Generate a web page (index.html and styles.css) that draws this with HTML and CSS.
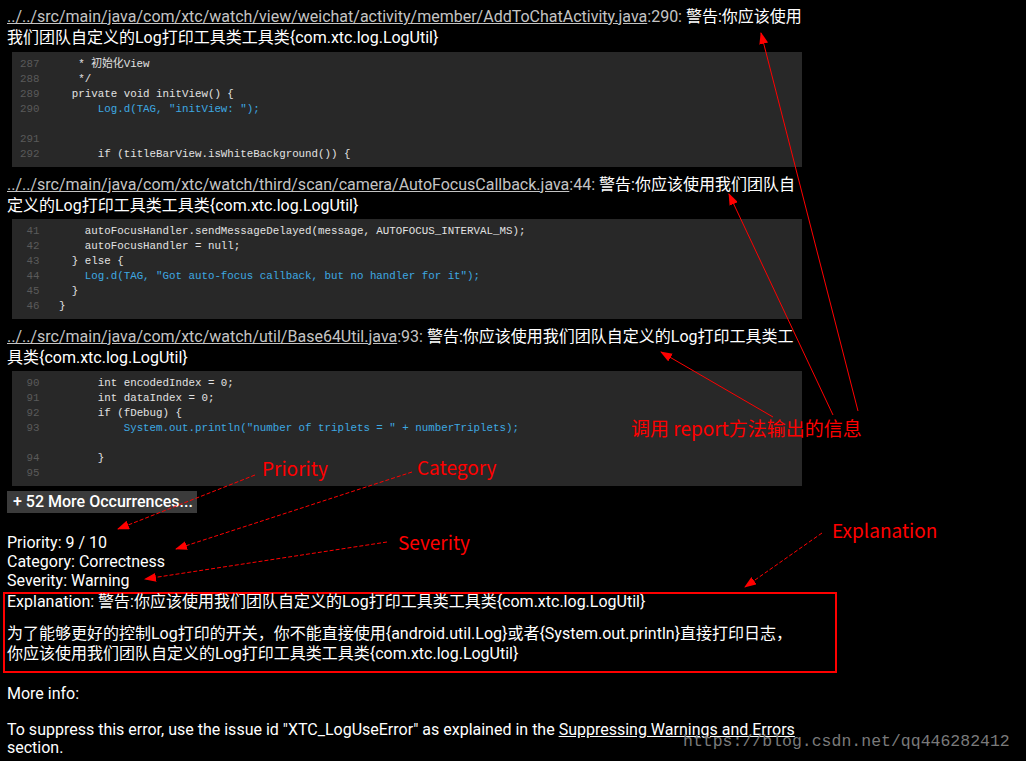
FILE: index.html
```html
<!DOCTYPE html>
<html lang="zh-CN">
<head>
  <meta charset="UTF-8" />
  <meta name="viewport" content="width=device-width, initial-scale=1.0"/>
  <title>Lint Report - XTC_LogUseError</title>
  <link rel="stylesheet" href="styles.css">
</head>
<body>
  <div class="report">
    <!-- occurrence 1 -->
    <div class="loc">
      <a class="file" href="#">../../src/main/java/com/xtc/watch/view/weichat/activity/member/AddToChatActivity.java</a>:290: <span class="msg">警告:你应该使用</span><br>
      <span class="msg">我们团队自定义的Log打印工具类工具类{com.xtc.log.LogUtil}</span>
    </div>
<pre class="code"><span class="ln">287</span>      * 初始化View
<span class="ln">288</span>      */
<span class="ln">289</span>     private void initView() {
<span class="ln">290</span> <span class="hl">        Log.d(TAG, "initView: ");</span>

<span class="ln">291</span>
<span class="ln">292</span>         if (titleBarView.isWhiteBackground()) {</pre>

    <!-- occurrence 2 -->
    <div class="loc">
      <a class="file" href="#">../../src/main/java/com/xtc/watch/third/scan/camera/AutoFocusCallback.java</a>:44: <span class="msg">警告:你应该使用我们团队自</span><br>
      <span class="msg">定义的Log打印工具类工具类{com.xtc.log.LogUtil}</span>
    </div>
<pre class="code"><span class="ln">41</span>       autoFocusHandler.sendMessageDelayed(message, AUTOFOCUS_INTERVAL_MS);
<span class="ln">42</span>       autoFocusHandler = null;
<span class="ln">43</span>     } else {
<span class="ln">44</span> <span class="hl">      Log.d(TAG, "Got auto-focus callback, but no handler for it");</span>
<span class="ln">45</span>     }
<span class="ln">46</span>   }</pre>

    <!-- occurrence 3 -->
    <div class="loc">
      <a class="file" href="#">../../src/main/java/com/xtc/watch/util/Base64Util.java</a>:93: <span class="msg">警告:你应该使用我们团队自定义的Log打印工具类工</span><br>
      <span class="msg">具类{com.xtc.log.LogUtil}</span>
    </div>
<pre class="code"><span class="ln">90</span>         int encodedIndex = 0;
<span class="ln">91</span>         int dataIndex = 0;
<span class="ln">92</span>         if (fDebug) {
<span class="ln">93</span> <span class="hl">            System.out.println("number of triplets = " + numberTriplets);</span>

<span class="ln">94</span>         }
<span class="ln">95</span></pre>

    <button class="more-btn">+ 52 More Occurrences...</button>

    <div class="meta">
      Priority: 9 / 10<br>
      Category: Correctness<br>
      Severity: Warning
    </div>

    <div class="explain-box">
      <div class="explain-title">Explanation: 警告:你应该使用我们团队自定义的Log打印工具类工具类{com.xtc.log.LogUtil}</div>
      <p class="explain-body">为了能够更好的控制Log打印的开关，你不能直接使用{android.util.Log}或者{System.out.println}直接打印日志，<br>你应该使用我们团队自定义的Log打印工具类工具类{com.xtc.log.LogUtil}</p>
    </div>

    <p class="more-info">More info:</p>
    <p class="suppress">To suppress this error, use the issue id "XTC_LogUseError" as explained in the <a href="#">Suppressing Warnings and Errors</a><br>section.</p>
  </div>

  <!-- annotations drawn over the screenshot -->
  <svg class="notes" width="1026" height="761" viewBox="0 0 1026 761">
    <defs>
      <marker id="head" markerUnits="userSpaceOnUse" markerWidth="12" markerHeight="9" refX="11" refY="4.5" orient="auto">
        <path d="M0,0 L12,4.5 L0,9 z" fill="#ff0000"/>
      </marker>
    </defs>
    <line x1="858" y1="411" x2="761" y2="33" class="arrow"/>
    <line x1="833" y1="415" x2="729" y2="194" class="arrow"/>
    <line x1="773" y1="417" x2="661" y2="352" class="arrow"/>
    <line x1="255" y1="475" x2="118" y2="529" class="arrow dashed"/>
    <line x1="412" y1="472" x2="176" y2="549" class="arrow dashed"/>
    <line x1="387" y1="542" x2="145" y2="579" class="arrow dashed"/>
    <line x1="822" y1="533" x2="745" y2="587" class="arrow dashed"/>
  </svg>
  <div class="note note-report">调用 report方法输出的信息</div>
  <div class="note note-priority">Priority</div>
  <div class="note note-category">Category</div>
  <div class="note note-severity">Severity</div>
  <div class="note note-explain">Explanation</div>

  <div class="watermark">https://blog.csdn.net/qq446282412</div>
</body>
</html>
```

FILE: styles.css
```css
body {
  margin: 0;
  background: #000;
  color: #fff;
  font-family: Roboto, "Noto Sans CJK SC", sans-serif;
  font-size: 16px;
  width: 1026px;
  height: 761px;
  overflow: hidden;
  position: relative;
}

.report {
  padding: 6px 0 0 7px;
  width: 795px;
}

.loc {
  line-height: 21px;
  color: #c4c4c4;
  white-space: nowrap;
  margin-top: 7px;
}

.loc:first-child {
  margin-top: 0;
}

.file {
  color: #c4c4c4;
  text-decoration: underline;
}

.msg {
  color: #fff;
}

.code {
  margin: 3px 0 0 5px;
  width: 790px;
  box-sizing: border-box;
  padding: 5px 8px;
  background: #282828;
  color: #e2e2e2;
  font-family: "Liberation Mono", "Noto Sans CJK SC", monospace;
  font-size: 10.8px;
  line-height: 15px;
  white-space: pre;
  overflow: hidden;
}

.loc:first-child + .code {
  margin-top: 4px;
}

.ln {
  display: inline-block;
  width: 3ch;
  text-align: right;
  color: #5a5a5a;
}

.hl {
  color: #3ea8e2;
}

.more-btn {
  display: block;
  margin-top: 5px;
  width: 190px;
  height: 22px;
  padding: 0 6px;
  border: none;
  background: #3b3b3b;
  color: #fff;
  font-family: Roboto, sans-serif;
  font-size: 16px;
  font-weight: 500;
  text-align: left;
  line-height: 22px;
  white-space: nowrap;
}

.meta {
  margin-top: 20px;
  line-height: 19px;
}

.explain-box {
  margin: 2px 0 0 -4px;
  width: 828px;
  border: 2px solid #ff0000;
  padding: 0 0 7px 2px;
}

.explain-title {
  line-height: 16px;
}

.explain-body {
  margin: 14px 0 0;
  line-height: 20px;
}

.more-info {
  margin: 11px 0 0;
  line-height: 19px;
}

.suppress {
  margin: 18px 0 0;
  line-height: 18px;
}

.suppress a {
  color: #fff;
}

.notes {
  position: absolute;
  top: 0;
  left: 0;
  pointer-events: none;
}

.arrow {
  stroke: #ff0000;
  stroke-width: 1;
  marker-end: url(#head);
}

.dashed {
  stroke-dasharray: 4 2;
}

.note {
  position: absolute;
  color: #ff0000;
  font-family: "Noto Sans CJK SC", sans-serif;
  font-size: 19px;
  line-height: 24px;
  white-space: nowrap;
}

.note-report { left: 631px; top: 416px; }
.note-priority { left: 262px; top: 456px; }
.note-category { left: 417px; top: 455px; }
.note-severity { left: 398px; top: 530px; }
.note-explain { left: 832px; top: 518px; }

.watermark {
  position: absolute;
  left: 683px;
  top: 730px;
  color: #7a7a7a;
  font-family: "Liberation Mono", monospace;
  font-size: 16.5px;
  line-height: 24px;
  white-space: nowrap;
}
```
